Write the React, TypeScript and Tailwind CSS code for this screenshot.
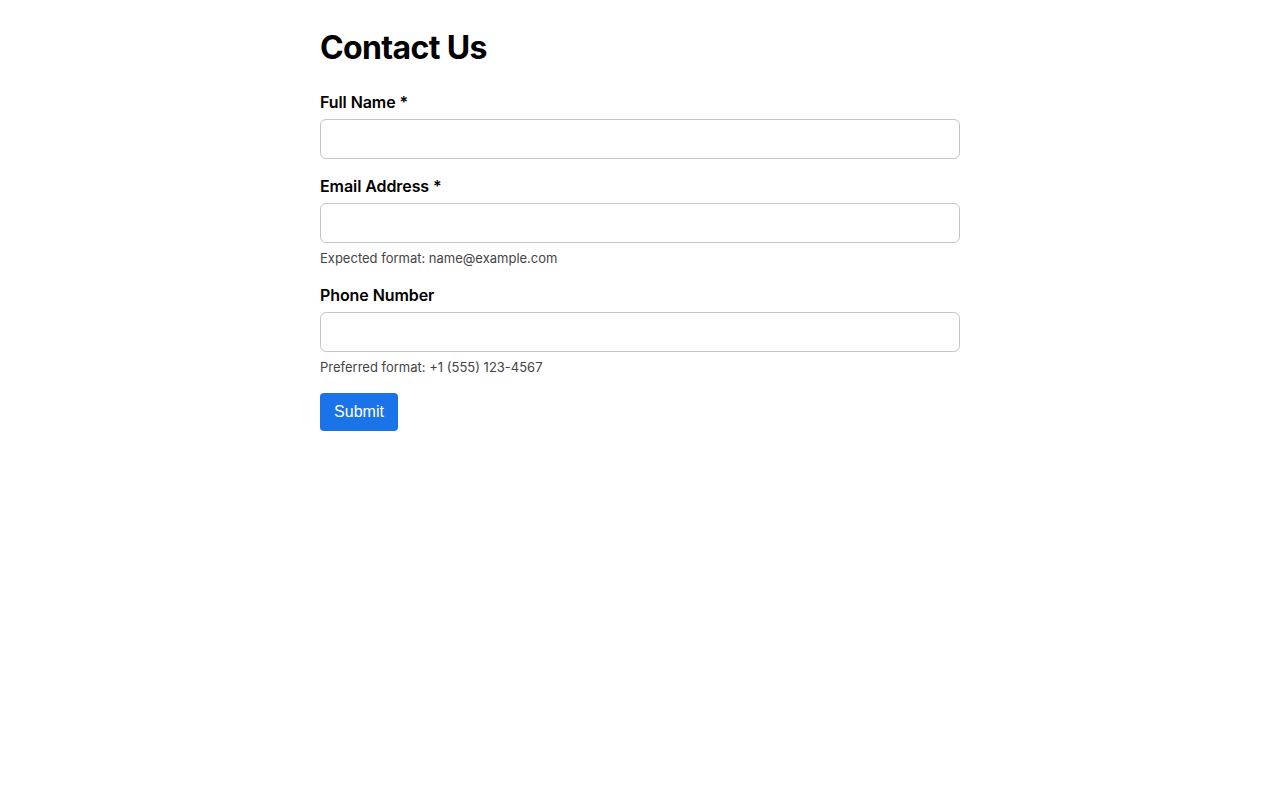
import React from "react";

const inter = { fontFamily: "Inter, 'Noto Sans', sans-serif" };

function Field({ label, hint, type }: { label: string; hint?: string; type: string }) {
  return (
    <div className="mb-[16px] flex flex-col">
      <label className="mb-[6px] text-[16px] font-semibold leading-[22px] tracking-[-0.005em] text-black">{label}</label>
      <input
        type={type}
        className="h-[40px] w-full rounded-[6px] border border-[#c6c6c6] bg-white px-3 text-[16px] outline-none"
      />
      {hint && (
        <p className="mb-[1px] mt-[7px] text-[13px] leading-[17px] text-[#444]">{hint}</p>
      )}
    </div>
  );
}

export default function App() {
  return (
    <div className="min-h-[800px] bg-white">
      <div className="mx-auto w-[640px] pt-[26px]" style={inter}>
        <h1 className="mb-[21px] text-[32px] font-bold leading-[44px] tracking-[-0.02em] text-black">Contact Us</h1>
        <form onSubmit={(e) => e.preventDefault()}>
          <Field label="Full Name *" type="text" />
          <Field label="Email Address *" type="email" hint="Expected format: name@example.com" />
          <Field label="Phone Number" type="tel" hint="Preferred format: +1 (555) 123-4567" />
          <button
            type="submit"
            className="h-[38px] w-[78px] rounded-[4px] bg-[#1a73e8] text-[16px] text-white font-['Liberation_Sans',Arial,sans-serif]"
          >
            Submit
          </button>
        </form>
      </div>
    </div>
  );
}
